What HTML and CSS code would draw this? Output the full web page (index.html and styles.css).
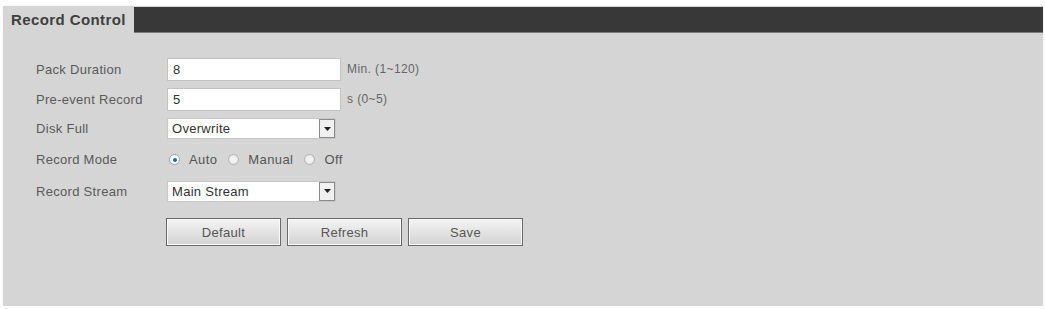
FILE: index.html
```html
<!DOCTYPE html>
<html>
<head>
<meta charset="utf-8">
<link rel="stylesheet" href="styles.css">
</head>
<body>
<div class="panel">
  <div class="header">
    <div class="tab">Record Control</div>
    <div class="bar"></div>
  </div>
  <div class="form">
    <div class="row r1">
      <div class="label">Pack Duration</div>
      <div class="field"><div class="input">8</div><span class="unit">Min. (1~120)</span></div>
    </div>
    <div class="row r2">
      <div class="label">Pre-event Record</div>
      <div class="field"><div class="input">5</div><span class="unit">s (0~5)</span></div>
    </div>
    <div class="row r3">
      <div class="label">Disk Full</div>
      <div class="field"><div class="select"><span class="val">Overwrite</span><span class="arrow"><svg width="7" height="4" viewBox="0 0 7 4"><path d="M0 0H7L3.5 4Z" fill="#222"/></svg></span></div></div>
    </div>
    <div class="row r4">
      <div class="label">Record Mode</div>
      <div class="field radios">
        <span class="radio on"></span><span class="rlabel">Auto</span>
        <span class="radio"></span><span class="rlabel">Manual</span>
        <span class="radio"></span><span class="rlabel">Off</span>
      </div>
    </div>
    <div class="row r5">
      <div class="label">Record Stream</div>
      <div class="field"><div class="select"><span class="val">Main Stream</span><span class="arrow"><svg width="7" height="4" viewBox="0 0 7 4"><path d="M0 0H7L3.5 4Z" fill="#222"/></svg></span></div></div>
    </div>
    <div class="buttons">
      <div class="btn">Default</div>
      <div class="btn">Refresh</div>
      <div class="btn">Save</div>
    </div>
  </div>
</div>
</body>
</html>
```
FILE: styles.css
```css
html, body {
  margin: 0;
  padding: 0;
  background: #fdfdfd;
  font-family: "Liberation Sans", Arial, sans-serif;
}
.panel {
  margin: 6px 2px 0 3px;
  width: 1040px;
  height: 300px;
  background: #d5d5d5;
  box-shadow: 0 0 1px #e8e8e8;
}
.header {
  display: flex;
  height: 27px;
  padding-top: 1px;
}
.tab {
  width: 131px;
  font-size: 15px;
  font-weight: bold;
  color: #404040;
  padding-left: 8px;
  box-sizing: border-box;
  line-height: 25px;
  letter-spacing: 0.4px;
}
.bar {
  flex: 1;
  height: 25px;
  background: #383838;
  border-bottom: 1px solid #7a7a7a;
}
.form {
  padding: 20px 0 0 33px;
}
.row {
  display: flex;
  align-items: center;
  height: 30px;
}
.r3 { height: 29px; }
.r4 { height: 33px; }
.label {
  width: 131px;
  font-size: 13px;
  color: #5a5a5a;
  letter-spacing: 0.3px;
}
.field {
  display: flex;
  align-items: center;
}
.input {
  width: 174px;
  height: 23px;
  box-sizing: border-box;
  background: #fff;
  border: 1px solid #c3c3c3;
  font-size: 13px;
  color: #333;
  padding-left: 5px;
  line-height: 21px;
}
.unit {
  margin-left: 6px;
  font-size: 12px;
  color: #666;
  letter-spacing: 0.4px;
}
.select {
  width: 169px;
  height: 21px;
  box-sizing: border-box;
  background: #fff;
  border: 1px solid #c8c8c8;
  display: flex;
  font-size: 13px;
  color: #333;
  letter-spacing: 0.3px;
}
.select .val {
  flex: 1;
  padding-left: 4px;
  line-height: 19px;
}
.select .arrow {
  width: 16px;
  height: 19px;
  box-sizing: border-box;
  border: 1px solid #8a8a8a;
  background: #f0f0f0;
  display: flex;
  align-items: center;
  justify-content: center;
}
.radios { padding-left: 2px; }
.radio {
  width: 11px;
  height: 11px;
  box-sizing: border-box;
  border-radius: 50%;
  border: 1px solid #b4b4b4;
  background: radial-gradient(circle, #f2f2f2 40%, #dadada 100%);
  margin-right: 9px;
  position: relative;
}
.radio.on {
  border-color: #8aa4b8;
  background: #fff;
}
.radio.on::after {
  content: "";
  position: absolute;
  left: 2.5px;
  top: 2.5px;
  width: 4px;
  height: 4px;
  border-radius: 50%;
  background: #2a6a98;
}
.rlabel {
  font-size: 13px;
  color: #555;
  margin-right: 11px;
  letter-spacing: 0.4px;
}
.buttons {
  display: flex;
  gap: 6px;
  margin-top: 12px;
  margin-left: 130px;
}
.btn {
  width: 115px;
  height: 28px;
  box-sizing: border-box;
  border: 1px solid #6a6a6a;
  background: linear-gradient(#f4f4f4, #e0e0e0 60%, #d2d2d2);
  font-size: 13px;
  color: #555;
  display: flex;
  align-items: center;
  justify-content: center;
  box-shadow: inset 0 0 0 1px #fafafa;
  letter-spacing: 0.3px;
}
```
